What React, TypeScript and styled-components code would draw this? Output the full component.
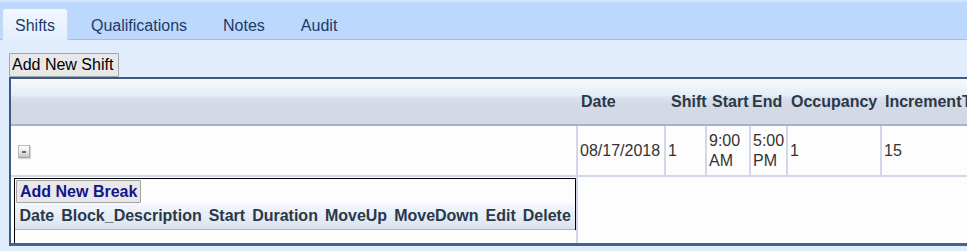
import React from 'react';
import styled, { createGlobalStyle } from 'styled-components';

const GlobalStyle = createGlobalStyle`
  html, body {
    margin: 0;
    overflow: hidden;
  }
  body {
    background: #e1edfd;
    font-family: "Liberation Sans", Arial, sans-serif;
    font-size: 16px;
  }
`;

const tabs = ['Shifts', 'Qualifications', 'Notes', 'Audit'];

const headerCols = ['Date', 'Shift', 'Start', 'End', 'Occupancy', 'Increment', 'Type'];

const breakCols = ['Date', 'Block_Description', 'Start', 'Duration', 'MoveUp', 'MoveDown', 'Edit', 'Delete'];

const shift = {
    date: '08/17/2018',
    shift: '1',
    start: '9:00 AM',
    end: '5:00 PM',
    occupancy: '1',
    increment: '15',
};

const App: React.FC = () => {
    return (
        <>
            <GlobalStyle />
            <TabBar>
                {tabs.map((t, i) => (
                    <Tab key={t} active={i === 0}>{t}</Tab>
                ))}
            </TabBar>

            <Content>
                <PlainButton>Add New Shift</PlainButton>

                <Grid>
                    <HeaderRow>
                        <span />
                        {headerCols.map(c => <HeadCell key={c}>{c}</HeadCell>)}
                    </HeaderRow>

                    <DataRow>
                        <Cell><Collapse title="collapse"><span /></Collapse></Cell>
                        <Cell>{shift.date}</Cell>
                        <Cell>{shift.shift}</Cell>
                        <Cell>{shift.start}</Cell>
                        <Cell>{shift.end}</Cell>
                        <Cell>{shift.occupancy}</Cell>
                        <Cell>{shift.increment}</Cell>
                        <Cell last />
                    </DataRow>

                    <DetailRow>
                        <DetailCell>
                            <BreakBox>
                                <BreakPanel>
                                    <BreakButton>Add New Break</BreakButton>
                                    <BreakHeader>
                                        {breakCols.map(c => <BreakHead key={c}>{c}</BreakHead>)}
                                    </BreakHeader>
                                </BreakPanel>
                            </BreakBox>
                        </DetailCell>
                        <div />
                    </DetailRow>
                </Grid>
            </Content>
        </>
    );
}

export default App;


const TabBar = styled.div`
  display: flex;
  align-items: flex-end;
  gap: 10px;
  height: 37px;
  padding-left: 2px;
  background: #bcd8fc;
  border-top: 2px solid #d4e4fb;
  border-bottom: 1px solid #9bc0ee;
`;

const Tab = styled.div<{ active?: boolean }>`
  box-sizing: border-box;
  height: ${p => (p.active ? '32px' : '31px')};
  margin-bottom: ${p => (p.active ? '-1px' : '0')};
  padding: 2px 12px 0;
  line-height: 29px;
  color: #1c3a68;
  border: 1px solid ${p => (p.active ? '#c4d9f3' : 'transparent')};
  border-bottom: none;
  border-radius: 4px 4px 0 0;
  background: ${p => (p.active ? 'linear-gradient(#f2f7fe, #e2eefd)' : 'transparent')};
`;

const Content = styled.div`
  padding: 13px 0 0 9px;
`;

const PlainButton = styled.button`
  display: block;
  box-sizing: border-box;
  height: 24px;
  margin: 0;
  padding: 0 5px 0 2px;
  font: 16px "Liberation Sans", Arial, sans-serif;
  color: #000;
  background: #e8e8e8;
  border: 1px solid #a4a4a4;
  border-radius: 1px;
`;

const Grid = styled.div`
  width: 1100px;
  background: #fdfdfd;
  border-top: 2px solid #3c5982;
  border-left: 2px solid #3c5982;
  border-bottom: 3px solid #45638c;
`;

const HeaderRow = styled.div`
  display: grid;
  grid-template-columns: 570px 90px 41px 40px 39px 94px 77px 1fr;
  align-items: center;
  height: 45px;
  background: linear-gradient(#f7f9fc 0%, #e4edf9 38%, #dbe2ee 40%, #d3dae6 58%, #d2d9e5 100%);
  border-bottom: 2px solid #a1b4cc;
`;

const HeadCell = styled.div`
  font-weight: bold;
  color: #2b3848;
  white-space: nowrap;
`;

const DataRow = styled.div`
  display: grid;
  grid-template-columns: 567px 88px 41px 44px 37px 94px 90px 1fr;
  height: 49px;
  border-bottom: 2px solid #d0d9e5;
`;

const Cell = styled.div<{ last?: boolean }>`
  display: flex;
  align-items: center;
  padding-left: 2px;
  line-height: 20px;
  color: #333;
  border-right: ${p => (p.last ? 'none' : '2px solid #d0d9e5')};
`;

const Collapse = styled.div`
  position: relative;
  box-sizing: border-box;
  width: 12px;
  height: 13px;
  margin-left: 5px;
  margin-top: 1px;
  border: 1px solid #b9b9b9;
  border-right-color: #a9a9a9;
  border-bottom-color: #a3a3a3;
  background: linear-gradient(#fdfdfd, #ececec 45%, #d2d2d2 80%, #c4c4c4);
  box-shadow: 1px 1px 1px rgba(0, 0, 0, 0.15);

  span {
    position: absolute;
    left: 3px;
    top: 5px;
    width: 4px;
    height: 2px;
    background: #6a6a6a;
  }
`;

const DetailRow = styled.div`
  display: grid;
  grid-template-columns: 567px 1fr;
  height: 66px;
`;

const DetailCell = styled.div`
  padding: 1px 0 0 3px;
  border-right: 2px solid #d0d9e5;
`;

const BreakBox = styled.div`
  height: 100%;
  border-left: 1px solid #000;
`;

const BreakPanel = styled.div`
  border-top: 1px solid #000;
  border-right: 1px solid #000;
`;

const BreakButton = styled.button`
  display: block;
  box-sizing: border-box;
  height: 23px;
  margin: 1px 0 0 1px;
  padding: 0 3px;
  font: bold 16px "Liberation Sans", Arial, sans-serif;
  color: #15158a;
  background: #e8e8e8;
  border: 1px solid #a4a4a4;
  border-radius: 1px;
`;

const BreakHeader = styled.div`
  display: flex;
  align-items: center;
  height: 26px;
  padding-left: 1px;
  background: linear-gradient(#f5f8fd, #e6edf7 50%, #d9e2ee);
  border-bottom: 1px solid #a7b7cc;
`;

const BreakHead = styled.div`
  padding: 0 3.5px;
  font-weight: bold;
  color: #2b3848;
  white-space: nowrap;
`;
